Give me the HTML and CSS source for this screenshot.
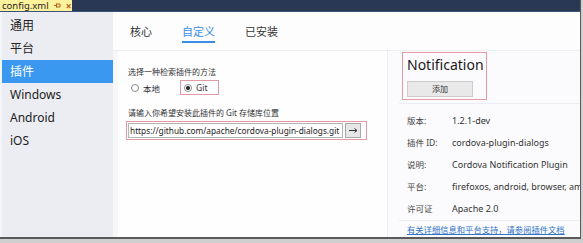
FILE: index.html
```html
<!DOCTYPE html>
<html lang="zh-CN">
<head>
  <meta charset="UTF-8" />
  <title>config.xml</title>
  <link rel="stylesheet" href="styles.css">
</head>
<body>

  <div class="window">
    <div class="titlebar">
      <div class="doc-tab">
        <span class="doc-name">config.xml</span>
        <svg class="pin" width="7" height="7" viewBox="0 0 7 7"><path d="M0 3.5h2.5M2.5 1.5v4M2.5 2h3.5v3h-3.5" fill="none" stroke="#b06020" stroke-width="1"/></svg>
        <span class="close">&#215;</span>
      </div>
    </div>

    <div class="app">
      <ul class="sidebar">
        <li>通用</li>
        <li>平台</li>
        <li class="active">插件</li>
        <li>Windows</li>
        <li>Android</li>
        <li>iOS</li>
      </ul>

      <div class="main">
        <div class="tabs">
          <span class="tab">核心</span>
          <span class="tab active">自定义</span>
          <span class="tab">已安装</span>
        </div>

        <div class="content">
          <div class="source">
            <div class="hint">选择一种检索插件的方法</div>
            <div class="radios">
              <label class="radio"><span class="dot"></span>本地</label>
              <label class="radio checked mark"><span class="dot"></span>Git</label>
            </div>

            <div class="hint hint-url">请输入你希望安装此插件的 Git 存储库位置</div>
            <div class="url-row mark">
              <input class="url" value="https://github.com/apache/cordova-plugin-dialogs.git" />
              <button class="go">
                <svg width="9" height="5" viewBox="0 0 9 5"><path d="M0 2.5h8M5.5 0.5l2.5 2-2.5 2" fill="none" stroke="#333" stroke-width="1"/></svg>
              </button>
            </div>
          </div>

          <div class="plugin">
            <div class="plugin-head mark">
              <div class="plugin-name">Notification</div>
              <button class="add">添加</button>
            </div>

            <div class="details">
              <div class="row"><span class="key">版本:</span><span>1.2.1-dev</span></div>
              <div class="row"><span class="key">插件 ID:</span><span>cordova-plugin-dialogs</span></div>
              <div class="row"><span class="key">说明:</span><span>Cordova Notification Plugin</span></div>
              <div class="row"><span class="key">平台:</span><span>firefoxos, android, browser, ama</span></div>
              <div class="row"><span class="key">许可证</span><span>Apache 2.0</span></div>
            </div>
            <a class="docs" href="#">有关详细信息和平台支持，请参阅插件文档</a>
          </div>
        </div>
      </div>
    </div>
  </div>

</body>
</html>
```

FILE: styles.css
```css
* {
  box-sizing: border-box;
}
body {
  margin: 0;
  width: 583px;
  height: 243px;
  overflow: hidden;
  background-color: #cfcfcf;
  font-family: "Noto Sans", "Noto Sans CJK SC", sans-serif;
  color: #222;
}
.window {
  width: 581px;
  height: 239px;
  border-right: 1px solid #5a5a5a;
  border-bottom: 2px solid #5a5a5a;
  display: flex;
  flex-direction: column;
  overflow: hidden;
}
.titlebar {
  height: 12px;
  flex-shrink: 0;
  background-color: #293955;
  border-bottom: 1px solid #3d5277;
  display: flex;
}
.doc-tab {
  width: 72px;
  height: 11px;
  background-color: #fff29d;
  display: flex;
  align-items: center;
  padding-left: 2px;
  gap: 5px;
}
.doc-name {
  font-size: 9.5px;
  line-height: 11px;
  color: #1e1e1e;
}
.close {
  font-size: 10px;
  line-height: 10px;
  color: #b06020;
  font-weight: bold;
}
.app {
  flex: 1;
  display: flex;
  background-color: #f6f7f9;
}
.sidebar {
  list-style: none;
  margin: 0;
  padding: 2px 0 0 0;
  width: 113px;
  flex-shrink: 0;
  background-color: #ebedf2;
  border-left: 2px solid #f4f5f8;
}
.sidebar li {
  height: 23px;
  line-height: 23px;
  padding-left: 8px;
  font-size: 12px;
  color: #222;
}
.sidebar li.active {
  background-color: #3a98f0;
  color: #fff;
}
.main {
  flex: 1;
  min-width: 0;
  display: flex;
  flex-direction: column;
}
.tabs {
  height: 39px;
  display: flex;
  align-items: flex-start;
  gap: 30px;
  padding: 12px 0 0 17px;
  border-bottom: 1px solid #eceef2;
  background-color: #fdfdfe;
}
.tab {
  font-size: 11px;
  line-height: 16px;
  padding-bottom: 1px;
  color: #333;
  border-bottom: 2px solid transparent;
}
.tab.active {
  color: #3a8ee6;
  border-bottom-color: #3a8ee6;
}
.content {
  flex: 1;
  display: flex;
}
.source {
  width: 270px;
  flex-shrink: 0;
  margin-left: 5px;
  padding: 15px 10px 0 10px;
  background-color: #fefeff;
  border-right: 1px solid #eceef2;
}
.hint {
  font-size: 8px;
  line-height: 12px;
  color: #333;
  white-space: nowrap;
}
.hint-url {
  margin-top: 12px;
}
.radios {
  margin-top: 2px;
  display: flex;
  gap: 16px;
}
.radio {
  height: 15px;
  display: flex;
  align-items: center;
  gap: 4px;
  font-size: 8.5px;
  color: #333;
  padding: 0 4px 0 3px;
}
.radio.checked {
  width: 39px;
}
.dot {
  width: 8px;
  height: 8px;
  border: 1px solid #8a8a8a;
  border-radius: 50%;
  background-color: #fff;
  display: flex;
  align-items: center;
  justify-content: center;
}
.checked .dot::after {
  content: "";
  width: 4px;
  height: 4px;
  border-radius: 50%;
  background-color: #222;
}
.mark {
  border: 1px solid #e49aa5;
}
.url-row {
  margin: 2px 0 0 -2px;
  width: 241px;
  height: 19px;
  display: flex;
  align-items: center;
  gap: 2px;
  padding: 0 1px;
}
.url {
  width: 215px;
  height: 15px;
  border: 1px solid #b5b5b5;
  padding: 0 1px;
  font-family: "Noto Sans", sans-serif;
  font-size: 8.3px;
  color: #222;
  background-color: #fff;
}
.go {
  width: 16px;
  height: 15px;
  padding: 0;
  border: 1px solid #a8a8a8;
  background-color: #e6e6e6;
  display: flex;
  align-items: center;
  justify-content: center;
}
.plugin {
  flex: 1;
  min-width: 0;
  padding: 1px 0 0 14px;
  background-color: #fbfbfd;
  overflow: hidden;
}
.plugin-head {
  width: 85px;
  height: 48px;
  padding: 1px 4px 0 4px;
}
.plugin-name {
  font-size: 14px;
  line-height: 21px;
  color: #1a1a1a;
  white-space: nowrap;
}
.add {
  margin-top: 2px;
  width: 66px;
  height: 16px;
  padding: 0;
  border: 1px solid #cdcdcd;
  background-color: #e9e9e9;
  font-family: "Noto Sans CJK SC", sans-serif;
  font-size: 8px;
  color: #333;
}
.details {
  margin: 3px 0 0 -3px;
  padding: 5px 0 1px 8px;
  border-top: 1px solid #eceef2;
  border-bottom: 1px solid #eceef2;
}
.row {
  height: 22px;
  display: flex;
  align-items: center;
  font-size: 9px;
  color: #333;
  white-space: nowrap;
}
.key {
  width: 45px;
  flex-shrink: 0;
  font-size: 8.5px;
  color: #444;
}
.docs {
  display: block;
  margin: 2px 0 0 5px;
  font-size: 8.3px;
  line-height: 14px;
  color: #2f72c6;
  white-space: nowrap;
}
```
